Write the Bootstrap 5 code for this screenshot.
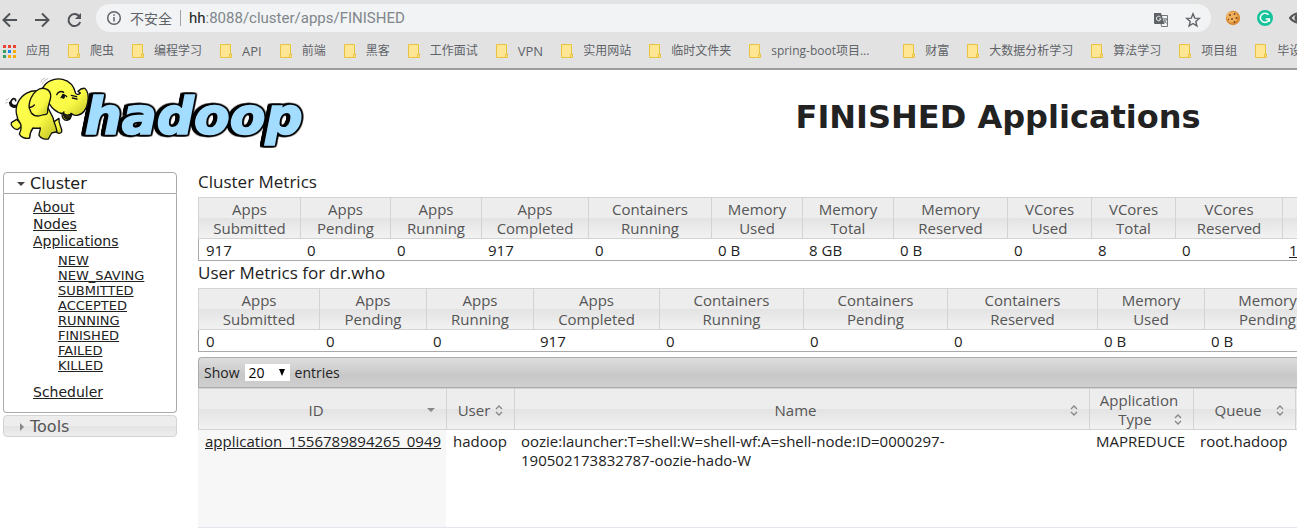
<!DOCTYPE html>
<html lang="zh-CN">
<head>
<meta charset="utf-8">
<meta name="viewport" content="width=device-width, initial-scale=1">
<title>FINISHED Applications</title>
<link href="https://cdn.jsdelivr.net/npm/bootstrap@5.3.0/dist/css/bootstrap.min.css" rel="stylesheet">
<style>
  body { font-family: "Open Sans", "Noto Sans CJK SC", sans-serif; font-size: 14px; line-height: 19px; color: #222; background: #fff; overflow: hidden; }
  button { border: 0; background: none; padding: 0; }

  /* browser chrome */
  .chrome { background: #e2e2e2; border-bottom: 2px solid #9e9e9e; height: 70px; overflow: hidden; }
  .toolbar { height: 36px; padding-left: 2px; gap: 16px; }
  .toolbar button { width: 16px; height: 36px; }
  .omnibox { height: 28px; border-radius: 14px; background: #f1f3f4; margin-left: -2px; padding: 0 10px; color: #5f6368; }
  .omnibox .divider { width: 1px; height: 16px; background: #a0a3a6; margin: 0 8px; }
  .url { font-family: Roboto, sans-serif; font-size: 15px; color: #80868b; }
  .url b { font-weight: 400; color: #202124; }
  .extensions { width: 72px; gap: 16px; overflow: hidden; margin-left: -2px; }
  .bookmarks { height: 30px; font-size: 12px; line-height: 16px; gap: 18px; white-space: nowrap; padding-left: 3px; }
  .bookmarks a { color: #5f6368; text-decoration: none; gap: 10px; flex-shrink: 0; }
  .bookmarks .latin { font-size: 13px; }
  .bookmarks .truncated { width: 136px; }
  .folder { width: 12px; height: 14px; }

  /* page head */
  .page-head { height: 102px; }
  .page-head h1 { font: bold 32px/40px "DejaVu Sans", sans-serif; margin: 0 0 9px; color: #222; }
  .head-title { padding-left: 30%; }
  .wordmark { filter: drop-shadow(4px 0 0 #000) drop-shadow(0 4px 0 #000) drop-shadow(0 -4px 0 #000) drop-shadow(-6px 0 0 #000) drop-shadow(-6px 0 0 #000); }

  /* side menu */
  .side { width: 174px; font-family: "DejaVu Sans", sans-serif; margin-left: 3px; }
  .side a { color: #222; text-decoration: underline; }
  .side h3 { font-size: 16px; line-height: 20px; margin: 0; padding: 1px 0 0 12px; gap: 4px; border: 1px solid #aaa; height: 22px; }
  .side .open-head { border-radius: 4px 4px 0 0; }
  .side .closed-head { border-color: #d3d3d3; color: #555; border-radius: 4px; margin-top: 2px; background: linear-gradient(#ededed 50%, #e3e3e3 50%, #ededed); }
  .side .panel { border: 1px solid #aaa; border-top: 0; border-radius: 0 0 4px 4px; padding: 5px 0 11px 29px; line-height: 17px; }
  .side ul { list-style: none; margin: 0; padding: 0; }
  .side .states { font-size: 13px; line-height: 15px; padding: 3px 0 11px 25px; }

  /* tables */
  .main-col { margin-left: 21px; overflow: hidden; }
  .main-col h2 { font-size: 17px; line-height: 20px; font-weight: 400; margin: 0; padding-bottom: 5px; }
  .main-col .metrics + h2 { padding-top: 2px; }
  .grid-table { table-layout: fixed; border-collapse: separate; border-spacing: 0; font-size: 15px; }
  .grid-table th { font-weight: 400; color: #555; text-align: center; vertical-align: middle; height: 42px; line-height: 19px; border: solid #d3d3d3; border-width: 1px 0 1px 1px; padding: 2px 8px 0; background: linear-gradient(#ededed 50%, #e3e3e3 50%, #f2f2f2); }
  .grid-table td { padding: 2px 8px 0; }
  .grid-table a { color: #222; text-decoration: underline; }
  .metrics { border-bottom: 1px solid #aaa; }
  .metrics td { height: 21px; padding: 1px 0 0 7px; vertical-align: middle; }
  .metrics td:first-child { border-left: 1px solid #aaa; }
  .w68 { width: 68px } .w84 { width: 84px } .w90 { width: 90px } .w91 { width: 91px } .w102 { width: 102px } .w104 { width: 104px }
  .w107 { width: 107px } .w114 { width: 114px } .w121 { width: 121px } .w123 { width: 123px } .w126 { width: 126px }
  .w144 { width: 144px } .w150 { width: 150px } .w248 { width: 248px } .w575 { width: 575px }
  .cluster-t { width: 1190px; } .user-t { width: 1257px; } .apps-t { width: 1196px; }
  .filter-bar { height: 31px; margin-top: 5px; padding-left: 5px; gap: 5px; border: 1px solid #aaa; border-right: 0; border-radius: 4px 0 0 0; background: linear-gradient(#dedede, #c8c8c8 60%, #cfcfcf); }
  .filter-bar select { appearance: none; border: 0; border-radius: 0; background: #fff; width: 45px; height: 17px; padding: 0 4px; font-size: 14px; line-height: 17px; color: #000; }
  .select-wrap { position: relative; line-height: 0; }
  .select-wrap svg { position: absolute; right: 5px; top: 5px; pointer-events: none; }
  .apps-t td { height: 98px; vertical-align: top; border-bottom: 1px solid #e4e4ec; padding: 2px 0 0 7px; }
  .apps-t td:first-child { background: #f7f7f7; }
  .apps-t th { padding-left: 6px; padding-right: 11px; }
  .apps-t th:last-child { padding: 0; }
</style>
</head>
<body>
<svg class="d-none">
  <symbol id="folder" viewBox="0 0 12 14"><path d="M.5.5h10V10h1v3.5H.5z" fill="#ffe694" stroke="#e9c33f"/><path d="M9.5 13.5V10.5h2" fill="none" stroke="#e9c33f"/></symbol>
  <symbol id="sort" viewBox="0 0 8 11"><path d="M1 4 4 1l3 3M1 7l3 3 3-3" fill="none" stroke="#888" stroke-width="1.4"/></symbol>
</svg>

<header class="chrome">
  <div class="toolbar d-flex align-items-center">
    <button aria-label="Back"><svg width="16" height="16" viewBox="0 0 16 16" fill="none" stroke="#505357" stroke-width="2"><path d="M15 8H2M8 1.5 1.5 8 8 14.5"/></svg></button>
    <button aria-label="Forward"><svg width="16" height="16" viewBox="0 0 16 16" fill="none" stroke="#505357" stroke-width="2"><path d="M1 8h13M8 1.5 14.5 8 8 14.5"/></svg></button>
    <button aria-label="Reload"><svg width="16" height="16" viewBox="0 0 16 16" fill="none" stroke="#505357" stroke-width="2"><path d="M13 4a6 6 0 1 0 1.200 6"/><path d="M15 1v6H9z" fill="#505357" stroke="none"/></svg></button>
    <div class="omnibox d-flex align-items-center flex-grow-1">
      <svg class="me-2" width="16" height="16" viewBox="0 0 16 16" fill="none" stroke="#5f6368" stroke-width="1.500"><circle cx="8" cy="8" r="6.300"/><path d="M8 7v4.500M8 4.200v1.600"/></svg>
      <span>不安全</span><span class="divider"></span>
      <span class="url flex-grow-1"><b>hh</b>:8088/cluster/apps/FINISHED</span>
      <button class="me-3" aria-label="Translate"><svg width="16" height="16" viewBox="0 0 16 16"><path d="M6.500 3.500h8v11h-6z" fill="#f1f3f4" stroke="#74777b"/><path d="M1 1h7l3.500 11H2a1 1 0 0 1-1-1z" fill="#5f6368"/><path d="M7.500 5A2.300 2.300 0 1 0 8 7H6" fill="none" stroke="#f1f3f4"/><path d="M10 7h4M12 6v1M13.500 7c-.5 2-1.500 3-2.500 3.500M11 8l2.500 3.500" fill="none" stroke="#74777b"/></svg></button>
      <button aria-label="Bookmark this page"><svg width="16" height="16" viewBox="0 0 16 16" fill="none" stroke="#5f6368" stroke-width="1.400"><path d="m8 1.800 1.700 4.300 4.600.3-3.500 3 1.100 4.500L8 11.500l-3.900 2.400 1.100-4.500-3.500-3 4.600-.3z"/></svg></button>
    </div>
    <div class="extensions d-flex align-items-center">
      <svg class="flex-shrink-0" width="16" height="16" viewBox="0 0 16 16"><circle cx="8" cy="8" r="7.200" fill="#d98b35"/><circle cx="7" cy="7" r="5.500" fill="#f0b05c"/><g fill="#7c4720"><circle cx="5" cy="5" r="1"/><circle cx="9.500" cy="4" r=".9"/><circle cx="11.500" cy="8" r="1"/><circle cx="7" cy="9" r="1"/><circle cx="3.500" cy="9.500" r=".8"/><circle cx="9.500" cy="12" r="1"/></g></svg>
      <svg class="flex-shrink-0" width="16" height="16" viewBox="0 0 16 16"><circle cx="8" cy="8" r="8" fill="#15c39a"/><path d="M11.500 4.800A4.600 4.600 0 1 0 12.400 9H8.600M12.400 8.500v3.300" fill="none" stroke="#fff" stroke-width="1.500"/></svg>
      <svg class="flex-shrink-0" width="18" height="16" viewBox="0 0 18 16"><path d="M1 8q8-9 16 0-8 9-16 0z" fill="none" stroke="#555" stroke-width="2"/><circle cx="9" cy="8" r="3.500" fill="#555"/></svg>
    </div>
  </div>
  <nav class="bookmarks d-flex align-items-center" aria-label="Bookmarks">
    <a href="#" class="d-flex align-items-center"><svg width="13" height="13" viewBox="0 0 13 13"><path d="M0 0h3v3H0zM5 0h3v3H5zM10 0h3v3h-3z" fill="#ea4335"/><path d="M0 5h3v3H0zM0 10h3v3H0z" fill="#34a060"/><path d="M5 5h3v3H5z" fill="#1a86f0"/><path d="M10 5h3v3h-3zM5 10h3v3H5zM10 10h3v3h-3z" fill="#fbab0c"/></svg>应用</a>
    <a href="#" class="d-flex align-items-center"><svg class="folder"><use href="#folder"/></svg>爬虫</a>
    <a href="#" class="d-flex align-items-center"><svg class="folder"><use href="#folder"/></svg>编程学习</a>
    <a href="#" class="d-flex align-items-center latin"><svg class="folder"><use href="#folder"/></svg>API</a>
    <a href="#" class="d-flex align-items-center"><svg class="folder"><use href="#folder"/></svg>前端</a>
    <a href="#" class="d-flex align-items-center"><svg class="folder"><use href="#folder"/></svg>黑客</a>
    <a href="#" class="d-flex align-items-center"><svg class="folder"><use href="#folder"/></svg>工作面试</a>
    <a href="#" class="d-flex align-items-center latin"><svg class="folder"><use href="#folder"/></svg>VPN</a>
    <a href="#" class="d-flex align-items-center"><svg class="folder"><use href="#folder"/></svg>实用网站</a>
    <a href="#" class="d-flex align-items-center"><svg class="folder"><use href="#folder"/></svg>临时文件夹</a>
    <a href="#" class="d-flex align-items-center truncated"><svg class="folder"><use href="#folder"/></svg>spring-boot项目...</a>
    <a href="#" class="d-flex align-items-center"><svg class="folder"><use href="#folder"/></svg>财富</a>
    <a href="#" class="d-flex align-items-center"><svg class="folder"><use href="#folder"/></svg>大数据分析学习</a>
    <a href="#" class="d-flex align-items-center"><svg class="folder"><use href="#folder"/></svg>算法学习</a>
    <a href="#" class="d-flex align-items-center"><svg class="folder"><use href="#folder"/></svg>项目组</a>
    <a href="#" class="d-flex align-items-center"><svg class="folder"><use href="#folder"/></svg>毕设</a>
  </nav>
</header>

<div class="page-head d-flex">
  <svg class="flex-shrink-0" width="310" height="85" viewBox="0 0 930 255" role="img" aria-label="hadoop">
    <defs><linearGradient id="skin" x1="0" y1="0" x2="1" y2="1"><stop offset="0" stop-color="#ffff50"/><stop offset=".6" stop-color="#fafa46"/><stop offset="1" stop-color="#b9bb20"/></linearGradient></defs>
    <text class="wordmark" x="254" y="191" font-family="DejaVu Sans" font-weight="bold" font-style="oblique" font-size="156" stroke-linejoin="miter" fill="#a2dcff" stroke="#a2dcff" stroke-width="5">hadoop</text>
    <g stroke="#111" stroke-width="4" stroke-linejoin="round" stroke-linecap="round" fill="url(#skin)">
      <path d="M50 106c-14 4-22-8-14-17 5-6 12-3 11 3M29 98c1 11 11 17 22 11" fill="none" stroke-width="5"/>
      <path d="M50 148 34 158c-3 8 7 19 18 21l16-12z"/>
      <path d="M158 158c8 12 10 20 4 26l15 6c8 0 9-5 8-11-3-12-10-22-8-34z"/>
      <path d="M118 63c-28-4-52 10-64 34-10 20-6 47 8 65 3 10 0 21-4 30 5 11 20 15 31 12 0-12 4-22 10-30 8 1 15 1 22 0 0 8-4 14-4 22 5 9 18 13 28 11l10-18 16-4c-2-16-10-28-12-42z"/>
      <path d="M128 54c10-20 34-31 60-26 21 5 34 20 39 42 4 5 9 4 14-1l-7-5c6-6 12-10 20-9 10 8 12 27 9 43-3 20-15 36-32 38-8 1-14-2-18-6 1 11-2 19-11 21-12 0-16-8-16-20-15-4-30-16-39-31z"/>
      <path d="M190 130c8 8 16 7 25 1-1 9-3 16-12 17-8-2-12-9-13-18z" fill="#282806"/>
      <path d="M138 57c-12-6-27 1-37 14-10 14-15 32-13 44l6 14c8 9 20 11 33 6 8-3 17 2 16-12-1-12 6-24 9-41 1-13-5-22-14-25z"/>
      <path d="M88 111c6 2 10 0 15-6M170 74c4-9 14-12 21-7M183 83c4-9 12-10 17-3M214 76l16 4M217 84l14 3M192 126c-3 4-7 5-10 4" fill="none"/>
      <ellipse cx="190" cy="79" rx="3" ry="6" fill="#111"/>
      <path d="M126 42q8-14 18-17M122 36q5-9 12-12M19 91l8-6M17 99l5-1" fill="none" stroke-width="1.500" stroke="#777"/>
    </g>
  </svg>
  <div class="head-title flex-grow-1 d-flex align-items-center justify-content-center"><h1 class="text-nowrap">FINISHED Applications</h1></div>
</div>

<div class="d-flex align-items-start">
  <aside class="side flex-shrink-0">
    <h3 class="open-head d-flex align-items-center fw-normal"><svg width="10" height="6" viewBox="0 0 10 6"><path d="M1 1h8L5 5z" fill="#444"/></svg>Cluster</h3>
    <div class="panel">
      <ul>
        <li><a href="#">About</a></li>
        <li><a href="#">Nodes</a></li>
        <li><a href="#">Applications</a>
          <ul class="states">
            <li><a href="#">NEW</a></li><li><a href="#">NEW_SAVING</a></li><li><a href="#">SUBMITTED</a></li><li><a href="#">ACCEPTED</a></li>
            <li><a href="#">RUNNING</a></li><li><a href="#">FINISHED</a></li><li><a href="#">FAILED</a></li><li><a href="#">KILLED</a></li>
          </ul>
        </li>
        <li><a href="#">Scheduler</a></li>
      </ul>
    </div>
    <h3 class="closed-head d-flex align-items-center fw-normal"><svg width="10" height="8" viewBox="0 0 10 8"><path d="M4 0v8l4-4z" fill="#888"/></svg>Tools</h3>
  </aside>

  <main class="main-col flex-grow-1">
    <h2>Cluster Metrics</h2>
    <table class="grid-table metrics cluster-t">
      <thead><tr>
        <th class="w102">Apps<br>Submitted</th><th class="w90">Apps<br>Pending</th><th class="w91">Apps<br>Running</th><th class="w107">Apps<br>Completed</th><th class="w123">Containers<br>Running</th><th class="w91">Memory<br>Used</th><th class="w91">Memory<br>Total</th><th class="w114">Memory<br>Reserved</th><th class="w84">VCores<br>Used</th><th class="w84">VCores<br>Total</th><th class="w107">VCores<br>Reserved</th><th></th>
      </tr></thead>
      <tbody><tr><td>917</td><td>0</td><td>0</td><td>917</td><td>0</td><td>0 B</td><td>8 GB</td><td>0 B</td><td>0</td><td>8</td><td>0</td><td><a href="#">1</a></td></tr></tbody>
    </table>
    <h2>User Metrics for dr.who</h2>
    <table class="grid-table metrics user-t">
      <thead><tr>
        <th class="w121">Apps<br>Submitted</th><th class="w107">Apps<br>Pending</th><th class="w107">Apps<br>Running</th><th class="w126">Apps<br>Completed</th><th class="w144">Containers<br>Running</th><th class="w144">Containers<br>Pending</th><th class="w150">Containers<br>Reserved</th><th class="w107">Memory<br>Used</th><th class="w126">Memory<br>Pending</th><th></th>
      </tr></thead>
      <tbody><tr><td>0</td><td>0</td><td>0</td><td>917</td><td>0</td><td>0</td><td>0</td><td>0 B</td><td>0 B</td><td></td></tr></tbody>
    </table>
    <div class="filter-bar d-flex align-items-center">
      <label for="entries">Show</label>
      <span class="select-wrap"><select id="entries"><option>20</option><option>40</option></select><svg width="6" height="7" viewBox="0 0 6 7"><path d="M0 0h6L3 7z"/></svg></span>
      <span>entries</span>
    </div>
    <table class="grid-table apps-t">
      <thead><tr>
        <th class="w248"><div class="d-flex align-items-center"><span class="flex-grow-1">ID</span><svg width="8" height="4" viewBox="0 0 8 4"><path d="M0 0h8L4 4z" fill="#888"/></svg></div></th>
        <th class="w68"><div class="d-flex align-items-center"><span class="flex-grow-1">User</span><svg width="8" height="11"><use href="#sort"/></svg></div></th>
        <th class="w575"><div class="d-flex align-items-center"><span class="flex-grow-1">Name</span><svg width="8" height="11"><use href="#sort"/></svg></div></th>
        <th class="w104"><div>Application</div><div class="d-flex align-items-center"><span class="flex-grow-1">Type</span><svg width="8" height="11"><use href="#sort"/></svg></div></th>
        <th class="w102"><div class="d-flex align-items-center"><span class="flex-grow-1">Queue</span><svg width="8" height="11"><use href="#sort"/></svg></div></th>
        <th></th>
      </tr></thead>
      <tbody><tr><td><a href="#">application_1556789894265_0949</a></td><td>hadoop</td><td>oozie:launcher:T=shell:W=shell-wf:A=shell-node:ID=0000297-<br>190502173832787-oozie-hado-W</td><td>MAPREDUCE</td><td>root.hadoop</td><td></td></tr></tbody>
    </table>
  </main>
</div>
<script src="https://cdn.jsdelivr.net/npm/bootstrap@5.3.0/dist/js/bootstrap.bundle.min.js"></script>
</body>
</html>
